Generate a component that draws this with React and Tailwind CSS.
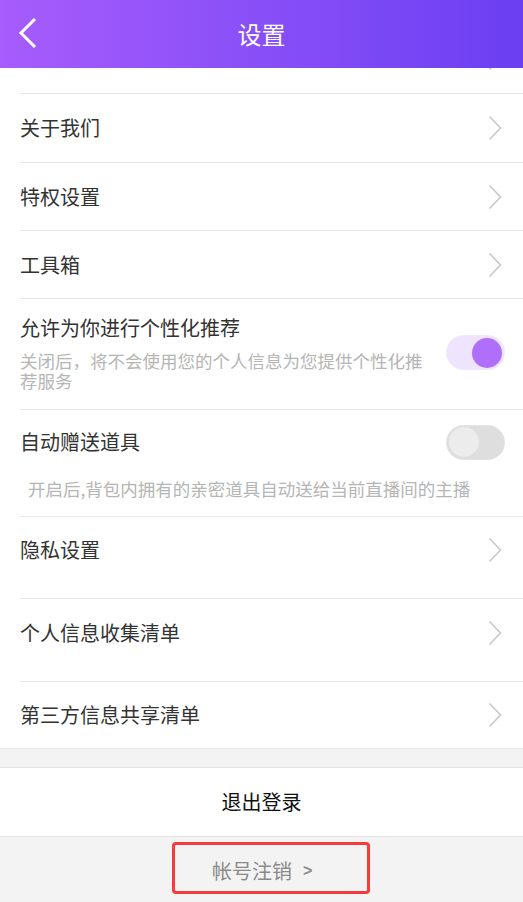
import React from 'react';

const Chevron = () => (
  <svg width="14" height="26" viewBox="0 0 14 26" fill="none" className="shrink-0">
    <polyline points="1.5,1.5 12.5,13 1.5,24.5" stroke="#c8c8c8" strokeWidth="1.6" fill="none" />
  </svg>
);

const Toggle = ({ on }) => (
  <div
    className={
      on
        ? 'w-[59px] h-[35px] rounded-full bg-[#efe4fd] border border-[#f1e8fd] flex items-center justify-end pr-[2px] shrink-0'
        : 'w-[59px] h-[35px] rounded-full bg-[#dedede] border border-[#e3e3e3] flex items-center justify-start pl-[2px] shrink-0'
    }
  >
    <div className={on ? 'w-[30px] h-[30px] rounded-full bg-[#b06ffa]' : 'w-[30px] h-[30px] rounded-full bg-[#ececec]'} />
  </div>
);

const LinkRow = ({ label, height, pb = 0 }) => (
  <div className="pl-[20px]">
    <div className="border-b border-[#e8e8e8] pr-[21px]" style={{ paddingBottom: pb }}>
      <div className="flex items-center justify-between" style={{ height }}>
        <span className="text-[20px] text-[#333]">{label}</span>
        <Chevron />
      </div>
    </div>
  </div>
);

export default function App() {
  return (
    <div
      className="w-[523px] h-[902px] overflow-hidden bg-[#f3f3f3] flex flex-col"
      style={{ fontFamily: '"Noto Sans CJK SC", "Noto Sans", sans-serif' }}
    >
      {/* Header */}
      <div className="h-[68px] shrink-0 bg-gradient-to-r from-[#a75cfc] to-[#6b3ef2] flex items-center relative">
        <svg width="40" height="40" viewBox="0 0 40 40" className="absolute left-[8px] top-[12px]">
          <polyline points="27,7 13,21 27,35" stroke="#fff" strokeWidth="3" fill="none" />
        </svg>
        <div className="flex-1 text-center text-white text-[24px] leading-none">设置</div>
      </div>

      <div className="bg-white">
        {/* partially scrolled row */}
        <div className="h-[26px] overflow-hidden flex flex-col justify-end">
          <LinkRow label="账号与安全" height={70} />
        </div>
        <LinkRow label="关于我们" height={68} />
        <LinkRow label="特权设置" height={67} />
        <LinkRow label="工具箱" height={67} />

        {/* personalized recommendation */}
        <div className="pl-[20px]">
          <div className="border-b border-[#e8e8e8] pr-[18px] pt-[15px] pb-[18px] flex items-center justify-between">
            <div>
              <div className="text-[20px] text-[#333] leading-[28px]">允许为你进行个性化推荐</div>
              <div className="text-[17.5px] text-[#b5b5b5] leading-[20px] mt-[9px] w-[410px]">
                关闭后，将不会使用您的个人信息为您提供个性化推荐服务
              </div>
            </div>
            <Toggle on />
          </div>
        </div>

        {/* auto gift */}
        <div className="pl-[20px]">
          <div className="border-b border-[#e8e8e8] pb-[17px]">
            <div className="h-[64px] flex items-center justify-between pr-[18px]">
              <span className="text-[20px] text-[#333]">自动赠送道具</span>
              <Toggle on={false} />
            </div>
            <div className="text-[17.5px] text-[#b5b5b5] leading-[20px] mt-[5px] pl-[8px]">
              开启后,背包内拥有的亲密道具自动送给当前直播间的主播
            </div>
          </div>
        </div>

        <LinkRow label="隐私设置" height={66} pb={15} />
        <LinkRow label="个人信息收集清单" height={68} pb={14} />
        <div className="pl-[20px]">
          <div className="pr-[21px] h-[66px]">
            <div className="flex items-center justify-between h-[66px]">
              <span className="text-[20px] text-[#333]">第三方信息共享清单</span>
              <Chevron />
            </div>
          </div>
        </div>
      </div>

      {/* gap */}
      <div className="h-[19px] border-t border-[#e6e6e6] bg-[#f3f3f3]" />

      {/* logout */}
      <div className="h-[70px] bg-white border-y border-[#e3e3e3] flex items-center justify-center">
        <span className="text-[20px] text-[#111]">退出登录</span>
      </div>

      {/* cancel account */}
      <div className="flex-1 flex justify-center pt-[5px]">
        <div className="ml-[19px] w-[198px] h-[52px] border-[3px] border-[#f53b3b] rounded-[4px] flex items-center justify-start pl-[37px] gap-[11px] pt-[6px]">
          <span className="text-[20px] text-[#8a8a8a]">帐号注销</span>
          <span className="text-[16px] font-bold text-[#8a8a8a]" style={{ fontFamily: '"Liberation Sans", sans-serif' }}>&gt;</span>
        </div>
      </div>
    </div>
  );
}
